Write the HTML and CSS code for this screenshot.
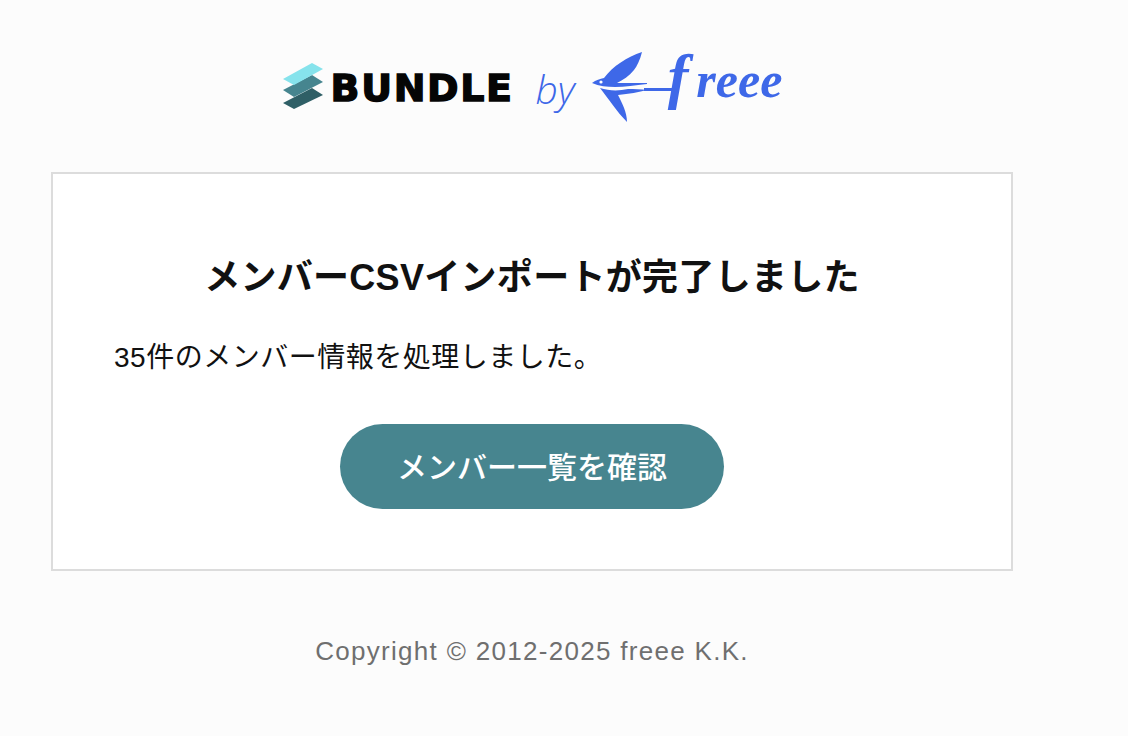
FILE: index.html
```html
<!DOCTYPE html>
<html lang="ja">
<head>
    <meta charset="UTF-8">
    <meta name="viewport" content="width=device-width, initial-scale=1.0">
    <title>メンバーCSVインポート</title>
    <link rel="stylesheet" href="styles.css">
</head>
<body>
    <div class="page">
        <header class="logo-row">
            <svg class="bundle-mark" xmlns="http://www.w3.org/2000/svg" viewBox="0 0 42 47" width="42" height="47">
                <path d="M1 40 L30 25 L41 32 L12 46 Z" fill="#2f5f66" />
                <path d="M1 27 L30 12 L41 19 L12 34 Z" fill="#46858f" />
                <path d="M1 16 L30 0 L41 6 L12 22 Z" fill="#86e3ec" />
            </svg>
            <span class="bundle-name">BUNDLE</span>
            <span class="by">by</span>
            <svg class="swallow" xmlns="http://www.w3.org/2000/svg" viewBox="0 0 58 71" width="58" height="71">
                <path d="M1 31 C5 28 9 27 13 26 C22 14 36 5 51 0 C49 8 46 14 43 18 C38 24 32 28 26 31 C36 31 46 31 56 31 L56 32 C44 33 34 35 24 35 C16 35 8 34 1 31 Z" fill="#3e68e8" />
                <path d="M9 36 C18 39 28 39 37 37 C43 37 50 37 56 38 C48 40 38 42 27 43 C31 51 36 60 36 70 C26 60 17 46 9 36 Z" fill="#3e68e8" />
                <circle cx="10" cy="30" r="1.6" fill="#fff" />
            </svg>
            <span class="freee-name"><span class="freee-f">f</span>reee</span>
        </header>

        <main class="card">
            <h1 class="card-title">メンバーCSVインポートが完了しました</h1>
            <p class="card-text">35件のメンバー情報を処理しました。</p>
            <div class="card-action">
                <a class="btn" href="#">メンバー一覧を確認</a>
            </div>
        </main>

        <footer class="copyright">Copyright © 2012-2025 freee K.K.</footer>
    </div>
</body>
</html>
```
FILE: styles.css
```css
* {
    margin: 0;
    padding: 0;
    box-sizing: border-box;
}

body {
    min-height: 100vh;
    background: #fcfcfc;
    color: #111;
    font-family: "Liberation Sans", "Noto Sans CJK JP", sans-serif;
}

.page {
    width: 962px;
    margin-left: 51px;
}

.logo-row {
    height: 172px;
    padding-top: 52px;
    display: flex;
    align-items: flex-start;
    justify-content: center;
}

.bundle-mark {
    margin-top: 11px;
    margin-right: 7px;
}

.bundle-name {
    margin-top: 14px;
    font-family: "DejaVu Sans", sans-serif;
    font-size: 38px;
    line-height: 44px;
    font-weight: 700;
    letter-spacing: 1.6px;
    color: #050505;
    -webkit-text-stroke: 1.4px #050505;
}

.by {
    margin: 15px 16px 0 22px;
    font-family: "Open Sans", sans-serif;
    font-size: 39px;
    line-height: 44px;
    font-weight: 300;
    font-style: italic;
    color: #3e68e8;
}

.swallow {
    flex: none;
}

.freee-name {
    position: relative;
    margin-top: -9px;
    margin-left: -5px;
    padding-left: 24px;
    font-family: "Liberation Serif", serif;
    font-size: 50px;
    line-height: 66px;
    font-weight: 700;
    font-style: italic;
    color: #3e68e8;
}

/* the swash on the f runs back into the bird's tail */
.freee-name::before {
    content: "";
    position: absolute;
    left: 0;
    top: 45px;
    width: 34px;
    height: 3px;
    background: #3e68e8;
}

.freee-f {
    margin-right: 8px;
    font-size: 62px;
}

.card {
    height: 399px;
    padding: 79px 61px 0;
    background: #fff;
    border: 2px solid #dcdcdc;
}

.card-title {
    font-size: 36px;
    line-height: 50px;
    font-weight: 700;
    letter-spacing: 0.3px;
    text-align: center;
    color: #111;
}

.card-text {
    margin-top: 35px;
    font-size: 28px;
    line-height: 40px;
    letter-spacing: 0.5px;
    color: #111;
}

.card-action {
    margin-top: 46px;
    display: flex;
    justify-content: center;
}

.btn {
    width: 384px;
    height: 85px;
    padding-bottom: 4px;
    display: flex;
    align-items: center;
    justify-content: center;
    background: #47858f;
    border-radius: 43px;
    color: #fff;
    font-size: 30px;
    font-weight: 500;
    text-decoration: none;
}

.copyright {
    margin-top: 60px;
    text-align: center;
    font-size: 26px;
    line-height: 40px;
    letter-spacing: 1.3px;
    color: #6f6f6f;
}
```
